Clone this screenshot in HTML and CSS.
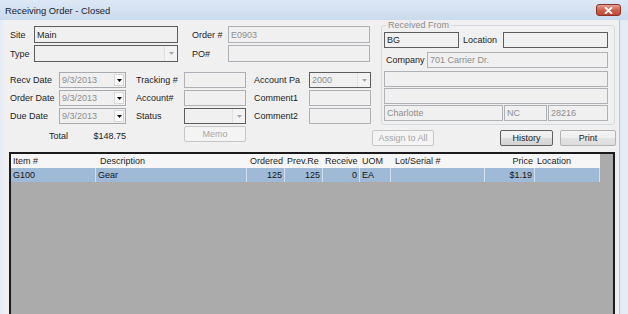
FILE: index.html
```html
<!DOCTYPE html>
<html>
<head>
<meta charset="utf-8">
<title>Receiving Order - Closed</title>
<link rel="stylesheet" href="styles.css">
</head>
<body>
<div class="window">
  <div class="titlebar">
    <span class="title">Receiving Order - Closed</span>
    <span class="close"><svg width="9" height="7" viewBox="0 0 9 7"><path d="M1.5 0.8 L7.5 6.2 M7.5 0.8 L1.5 6.2" stroke="#ffffff" stroke-width="1.9" stroke-linecap="round"/></svg></span>
  </div>
  <div class="frame">
    <div class="content">
      <div class="top">
        <div class="left">
          <div class="grid1">
            <span class="lbl">Site</span>
            <div class="tb dark"><span class="txt dk">Main</span></div>
            <span class="lbl pl14">Order #</span>
            <div class="tb"><span class="txt">E0903</span></div>

            <span class="lbl">Type</span>
            <div class="tb dark"><span class="txt"></span><span class="arrow"><svg width="5" height="3" viewBox="0 0 5 3"><path d="M0 0 H5 L2.5 3 Z" fill="#a8a8a8"/></svg></span></div>
            <span class="lbl pl14">PO#</span>
            <div class="tb"></div>
          </div>

          <div class="grid2">
            <span class="lbl">Recv Date</span>
            <div class="tb date"><span class="txt">9/3/2013</span><span class="ddb"><svg width="5" height="3" viewBox="0 0 5 3"><path d="M0 0 H5 L2.5 3 Z" fill="#000"/></svg></span></div>
            <span class="lbl pl10">Tracking #</span>
            <div class="tb"></div>
            <span class="lbl pl8">Account Pa</span>
            <div class="tb dark"><span class="txt">2000</span><span class="arrow"><svg width="5" height="3" viewBox="0 0 5 3"><path d="M0 0 H5 L2.5 3 Z" fill="#a8a8a8"/></svg></span></div>

            <span class="lbl">Order Date</span>
            <div class="tb date"><span class="txt">9/3/2013</span><span class="ddb"><svg width="5" height="3" viewBox="0 0 5 3"><path d="M0 0 H5 L2.5 3 Z" fill="#000"/></svg></span></div>
            <span class="lbl pl10">Account#</span>
            <div class="tb"></div>
            <span class="lbl pl8">Comment1</span>
            <div class="tb"></div>

            <span class="lbl">Due Date</span>
            <div class="tb date"><span class="txt">9/3/2013</span><span class="ddb"><svg width="5" height="3" viewBox="0 0 5 3"><path d="M0 0 H5 L2.5 3 Z" fill="#000"/></svg></span></div>
            <span class="lbl pl10">Status</span>
            <div class="tb dark"><span class="txt"></span><span class="arrow"><svg width="5" height="3" viewBox="0 0 5 3"><path d="M0 0 H5 L2.5 3 Z" fill="#a8a8a8"/></svg></span></div>
            <span class="lbl pl8">Comment2</span>
            <div class="tb"></div>

            <div class="total"><span class="tlbl">Total</span><span>$148.75</span></div>
            <span class="btn disabled memo">Memo</span>
          </div>
        </div>

        <div class="right">
          <fieldset class="group">
            <legend>Received From</legend>
            <div class="frow">
              <div class="tb dark bg"><span class="txt dk">BG</span></div>
              <span class="lbl loc">Location</span>
              <div class="tb dark grow"></div>
            </div>
            <div class="frow m4">
              <span class="lbl comp">Company</span>
              <div class="tb grow"><span class="txt">701 Carrier Dr.</span></div>
            </div>
            <div class="frow m3">
              <div class="tb grow"></div>
            </div>
            <div class="frow m1">
              <div class="tb grow"></div>
            </div>
            <div class="frow m1">
              <div class="tb city"><span class="txt">Charlotte</span></div>
              <div class="tb state"><span class="txt">NC</span></div>
              <div class="tb grow zip"><span class="txt">28216</span></div>
            </div>
          </fieldset>
          <div class="btnrow">
            <span class="btn disabled assign">Assign to All</span>
            <span class="btn hist">History</span>
            <span class="btn print">Print</span>
          </div>
        </div>
      </div>

      <div class="grid">
        <div class="row head">
          <span class="c">Item #</span>
          <span class="c pl4">Description</span>
          <span class="c r">Ordered</span>
          <span class="c">Prev.Re</span>
          <span class="c">Receive</span>
          <span class="c">UOM</span>
          <span class="c pl4">Lot/Serial #</span>
          <span class="c r">Price</span>
          <span class="c">Location</span>
        </div>
        <div class="row data">
          <span class="c">G100</span>
          <span class="c">Gear</span>
          <span class="c r">125</span>
          <span class="c r">125</span>
          <span class="c r">0</span>
          <span class="c">EA</span>
          <span class="c"></span>
          <span class="c r">$1.19</span>
          <span class="c"></span>
        </div>
      </div>
    </div>
  </div>
</div>
</body>
</html>
```

FILE: styles.css
```css
* { box-sizing: border-box; }
html, body { margin: 0; padding: 0; }
body {
  width: 628px;
  height: 314px;
  overflow: hidden;
  font-family: "Liberation Sans", Arial, sans-serif;
  font-size: 9px;
  color: #1c1c1c;
  background: #f0f0f0;
}
.window {
  width: 628px;
  height: 314px;
  display: flex;
  flex-direction: column;
}
.titlebar {
  height: 20px;
  flex: none;
  display: flex;
  align-items: center;
  padding-left: 5px;
  background: linear-gradient(#dde8f6, #cbdaed);
}
.title { font-size: 9.4px; color: #0f1f35; }
.close {
  margin-left: auto;
  margin-right: 7px;
  width: 25px;
  height: 12px;
  border: 1px solid #8a3327;
  border-radius: 3px;
  background: linear-gradient(#e6a293, #d0604d 50%, #bf4633);
  display: flex;
  align-items: center;
  justify-content: center;
}
.close svg { display: block; }
.frame {
  flex: 1;
  min-height: 0;
  display: flex;
  padding: 0 8px 0 3px;
  background: #e5ecf5;
}
.content {
  flex: 1;
  min-height: 0;
  display: flex;
  flex-direction: column;
  background: #f0f0f0;
  border-right: 1px solid #b4c4d6;
}
.top {
  display: flex;
  align-items: flex-start;
  padding: 0 3px 0 7px;
  flex: none;
}
.left { width: 362px; flex: none; margin-top: 6px; }
.right { flex: 1; min-width: 0; }

.lbl { white-space: nowrap; color: #1c1c1c; }
.pl14 { padding-left: 14px; }
.pl10 { padding-left: 10px; }
.pl8 { padding-left: 8px; }

.grid1 {
  display: grid;
  grid-template-columns: 24px 144px 50px 142px;
  grid-auto-rows: 17px;
  row-gap: 2px;
  align-items: center;
}
.grid2 {
  margin-top: 10px;
  display: grid;
  grid-template-columns: 49px 67px 58px 62px 63px 62px;
  grid-template-rows: 16px 16px 16px 16px;
  row-gap: 2px;
  align-items: center;
}

.tb {
  height: 100%;
  display: flex;
  align-items: center;
  border: 1px solid #afb1b6;
  background: #f0f0f0;
  overflow: hidden;
  white-space: nowrap;
  padding-left: 2px;
}
.tb.dark { border-color: #5d5d5d; }
.txt { flex: 1; color: #8e8e8e; }
.txt.dk { color: #1f1f1f; }
.arrow {
  width: 13px;
  height: 100%;
  flex: none;
  display: flex;
  align-items: center;
  justify-content: center;
  background: #f3f3f3;
  border-left: 1px solid #e2e2e2;
}
.arrow svg, .ddb svg { display: block; }
.ddb {
  width: 10px;
  height: 12px;
  flex: none;
  margin-right: 1px;
  display: flex;
  align-items: center;
  justify-content: center;
  background: #fcfcfc;
  border: 1px solid #d6d6d6;
}
.date { border-color: #a9abb0; }

.total {
  grid-column: 1 / 3;
  display: flex;
  padding-left: 39px;
  padding-top: 4px;
}
.tlbl { width: 53px; }
.memo { grid-column: 4; height: 16px; }

.btn {
  display: flex;
  align-items: center;
  justify-content: center;
  height: 16px;
  border: 1px solid #707070;
  border-radius: 2px;
  background: linear-gradient(#f3f3f3, #ebebeb 50%, #dedede 51%, #d4d4d4);
  color: #1c1c1c;
  white-space: nowrap;
}
.btn.disabled {
  border-color: #c6c6c6;
  background: #f4f4f4;
  color: #a6a6a6;
}

.group {
  margin: 0 1px 0 9px;
  padding: 2px 6px 3px 2px;
  border: 1px solid #d3d9de;
  border-radius: 3px;
  min-width: 0;
}
.group legend {
  font-size: 9px;
  line-height: 10px;
  color: #8b8b8b;
  padding: 0 2px;
  margin-left: 2px;
}
.frow { display: flex; height: 16px; align-items: center; }
.m4 { margin-top: 4px; }
.m3 { margin-top: 3px; }
.m1 { margin-top: 1px; }
.bg { width: 75px; flex: none; }
.loc { padding: 0 6px 0 4px; }
.grow { flex: 1; min-width: 0; }
.comp { width: 43px; padding-left: 2px; flex: none; }
.city { width: 119px; flex: none; }
.state { width: 43px; flex: none; margin-left: 1px; }
.zip { margin-left: 1px; }

.btnrow {
  margin-top: 5px;
  display: flex;
  align-items: center;
}
.assign { width: 62px; }
.hist { width: 53px; margin-left: auto; border-color: #5f5f5f; }
.print { width: 56px; margin-left: 7px; border-color: #b3b3b3; background: linear-gradient(#f5f5f5, #eeeeee 50%, #e4e4e4 51%, #dcdcdc); }

.grid {
  flex: 1;
  min-height: 0;
  margin: 6px 4px 0 6px;
  border: 2px solid #1b1b1b;
  border-bottom: none;
  background: #ababab;
}
.row {
  display: grid;
  grid-template-columns: 85px 151px 38px 38px 37px 31px 94px 50px 65px;
  width: 589px;
  height: 14px;
}
.row .c {
  display: flex;
  align-items: center;
  padding: 0 2px;
  white-space: nowrap;
  overflow: hidden;
}
.row .c.r { justify-content: flex-end; }
.row .c.pl4 { padding-left: 4px; }
.head { background: #f6f6f6; color: #1c1c1c; }
.data { background: #9fbad7; color: #151515; }
.data .c { border-right: 1px solid #d2deeb; }
```
